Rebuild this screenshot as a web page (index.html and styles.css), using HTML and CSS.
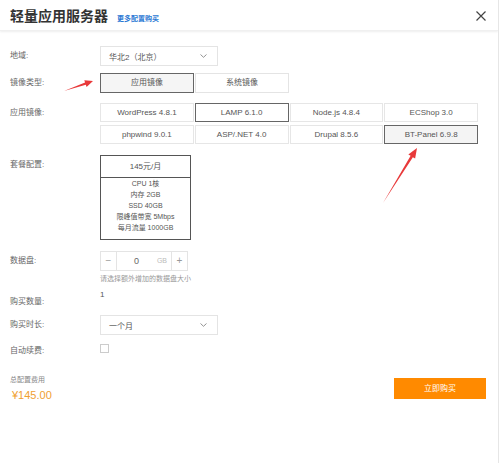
FILE: index.html
```html
<!DOCTYPE html>
<html lang="zh">
<head>
<meta charset="utf-8">
<link rel="stylesheet" href="styles.css">
</head>
<body>
<div class="modal">
  <div class="header">
    <div class="title-wrap">
      <span class="title">轻量应用服务器</span>
      <span class="more">更多配置购买</span>
    </div>
    <svg class="close" width="10" height="10" viewBox="0 0 10 10"><path d="M0.5 0.5L9.5 9.5M9.5 0.5L0.5 9.5" stroke="#444" stroke-width="1.2" fill="none"/></svg>
  </div>

  <div class="form">
    <div class="row r-region">
      <div class="label lh20">地域:</div>
      <div class="select"><span>华北2（北京）</span><svg class="chev" width="7" height="4" viewBox="0 0 7 4"><path d="M0.5 0.5L3.5 3.3L6.5 0.5" stroke="#888" stroke-width="0.9" fill="none"/></svg></div>
    </div>

    <div class="row r-type">
      <div class="label lh20">镜像类型:</div>
      <div class="tabs">
        <div class="tab active">应用镜像</div>
        <div class="tab">系统镜像</div>
      </div>
    </div>

    <div class="row r-app">
      <div class="label lh19">应用镜像:</div>
      <div class="apps">
        <div class="cell">WordPress 4.8.1</div>
        <div class="cell sel">LAMP 6.1.0</div>
        <div class="cell">Node.js 4.8.4</div>
        <div class="cell">ECShop 3.0</div>
        <div class="cell">phpwind 9.0.1</div>
        <div class="cell">ASP/.NET 4.0</div>
        <div class="cell">Drupal 8.5.6</div>
        <div class="cell sel gray">BT-Panel 6.9.8</div>
      </div>
    </div>

    <div class="row r-plan">
      <div class="label lh20">套餐配置:</div>
      <div class="card">
        <div class="card-head">145元/月</div>
        <div class="card-body">
          <div>CPU 1核</div>
          <div>内存 2GB</div>
          <div>SSD 40GB</div>
          <div>限峰值带宽 5Mbps</div>
          <div>每月流量 1000GB</div>
        </div>
      </div>
    </div>

    <div class="row r-disk">
      <div class="label lh20">数据盘:</div>
      <div class="disk">
        <div class="stepper">
          <div class="step minus">−</div>
          <div class="step-val"><span class="zero">0</span><span class="unit">GB</span></div>
          <div class="step plus">+</div>
        </div>
        <div class="hint">请选择额外增加的数据盘大小</div>
      </div>
    </div>

    <div class="row r-qty">
      <div class="label low">购买数量:</div>
      <div class="qty">1</div>
    </div>

    <div class="row r-dur">
      <div class="label lh20">购买时长:</div>
      <div class="select"><span>一个月</span><svg class="chev" width="7" height="4" viewBox="0 0 7 4"><path d="M0.5 0.5L3.5 3.3L6.5 0.5" stroke="#888" stroke-width="0.9" fill="none"/></svg></div>
    </div>

    <div class="row r-auto">
      <div class="label low2">自动续费:</div>
      <div class="check"></div>
    </div>
  </div>

  <div class="footer">
    <div class="total">
      <div class="total-label">总配置费用</div>
      <div class="price">¥145.00</div>
    </div>
    <div class="buy">立即购买</div>
  </div>

  <svg class="arrows" width="499" height="463" viewBox="0 0 499 463">
    <polygon points="64,91 85.83,84.74 86.58,86.92 93,81 84.30,80.30 85.05,82.48" fill="#e8393a"/>
    <polygon points="383,203 412.85,157.19 415.14,158.61 417,148 408.34,154.41 410.63,155.83" fill="#e8393a"/>
  </svg>
</div>
</body>
</html>
```

FILE: styles.css
```css
html, body {
  margin: 0;
  padding: 0;
  background: #fff;
}
body {
  font-family: "Liberation Sans", "Noto Sans CJK SC", sans-serif;
  color: #555;
}
.modal {
  position: relative;
  width: 498px;
  height: 463px;
  border-right: 1px solid #e6e6e6;
  overflow: hidden;
}
.header {
  height: 31px;
  display: flex;
  align-items: center;
  justify-content: space-between;
  padding: 0 12px 0 10px;
  box-shadow: 0 1px 2px rgba(0, 0, 0, 0.07);
  border-bottom: 1px solid #f0f0f0;
  box-sizing: border-box;
}
.title-wrap {
  display: flex;
  align-items: baseline;
}
.title {
  font-size: 14px;
  font-weight: bold;
  color: #333;
}
.more {
  font-size: 7px;
  color: #2a78d4;
  margin-left: 9px;
  font-weight: bold;
}
.close {
  display: block;
  margin-top: 1px;
}
.form {
  padding-top: 15px;
}
.row {
  display: flex;
  align-items: flex-start;
}
.label {
  width: 100px;
  padding-left: 10px;
  box-sizing: border-box;
  font-size: 8px;
  color: #666;
  flex: none;
}
.lh20 { line-height: 20px; }
.lh19 { line-height: 19px; }
.low { padding-top: 7px; line-height: 10px; }
.low2 { padding-top: 2px; line-height: 10px; }

.select {
  width: 118px;
  height: 20px;
  border: 1px solid #e4e4e4;
  box-sizing: border-box;
  display: flex;
  align-items: center;
  justify-content: space-between;
  padding: 0 10px 0 8px;
  font-size: 8px;
  color: #555;
}
.chev { display: block; }

.r-type { margin-top: 7px; }
.tabs {
  display: flex;
  gap: 1px;
}
.tab {
  width: 94px;
  height: 20px;
  box-sizing: border-box;
  border: 1px solid #e4e4e4;
  text-align: center;
  line-height: 18px;
  font-size: 8px;
  color: #555;
}
.tab.active {
  border-color: #666;
  background: #f5f5f5;
}

.r-app { margin-top: 10px; }
.apps {
  width: 378px;
  display: grid;
  grid-template-columns: repeat(4, 1fr);
  column-gap: 1px;
  row-gap: 3px;
}
.cell {
  height: 19px;
  box-sizing: border-box;
  border: 1px solid #e6e6e6;
  text-align: center;
  line-height: 17px;
  font-size: 8px;
  color: #555;
}
.cell.sel { border-color: #666; }
.cell.gray { background: #f4f4f4; }

.r-plan { margin-top: 11px; }
.card {
  width: 91px;
  border: 1px solid #555;
  box-sizing: border-box;
  text-align: center;
  color: #555;
}
.card-head {
  height: 21px;
  line-height: 21px;
  border-bottom: 1px solid #555;
  font-size: 8px;
}
.card-body {
  font-size: 7px;
  line-height: 11px;
  padding-bottom: 6px;
}

.r-disk { margin-top: 11px; }
.disk {
  display: flex;
  flex-direction: column;
}
.stepper {
  width: 88px;
  height: 20px;
  box-sizing: border-box;
  border: 1px solid #e4e4e4;
  display: flex;
}
.step {
  width: 15px;
  flex: none;
  text-align: center;
  line-height: 18px;
  font-size: 10px;
  color: #999;
}
.minus { border-right: 1px solid #e4e4e4; }
.plus { border-left: 1px solid #e4e4e4; }
.step-val {
  flex: 1;
  position: relative;
  line-height: 18px;
  font-size: 8px;
}
.zero {
  position: absolute;
  left: 17px;
  color: #666;
  font-size: 9px;
}
.unit {
  position: absolute;
  right: 4px;
  color: #bbb;
  font-size: 7px;
}
.hint {
  margin-top: 3px;
  font-size: 7px;
  line-height: 10px;
  color: #999;
}

.r-qty { margin-top: 6px; }
.qty {
  font-size: 8px;
  line-height: 10px;
  color: #555;
}

.r-dur { margin-top: 8px; }
.r-auto { margin-top: 9px; }
.check {
  width: 9px;
  height: 9px;
  box-sizing: border-box;
  border: 1px solid #ccc;
}

.footer {
  display: flex;
  justify-content: space-between;
  align-items: flex-start;
  padding: 0 12px 0 10px;
  margin-top: 19px;
}
.total-label {
  font-size: 7px;
  line-height: 10px;
  color: #888;
}
.price {
  margin-top: 4px;
  padding-left: 2px;
  font-size: 11px;
  line-height: 12px;
  color: #f0a030;
}
.buy {
  margin-top: 3px;
  width: 92px;
  height: 21px;
  background: #ff8a00;
  color: #fff;
  font-size: 8px;
  text-align: center;
  line-height: 21px;
}
.arrows {
  position: absolute;
  left: 0;
  top: 0;
  pointer-events: none;
}
```
